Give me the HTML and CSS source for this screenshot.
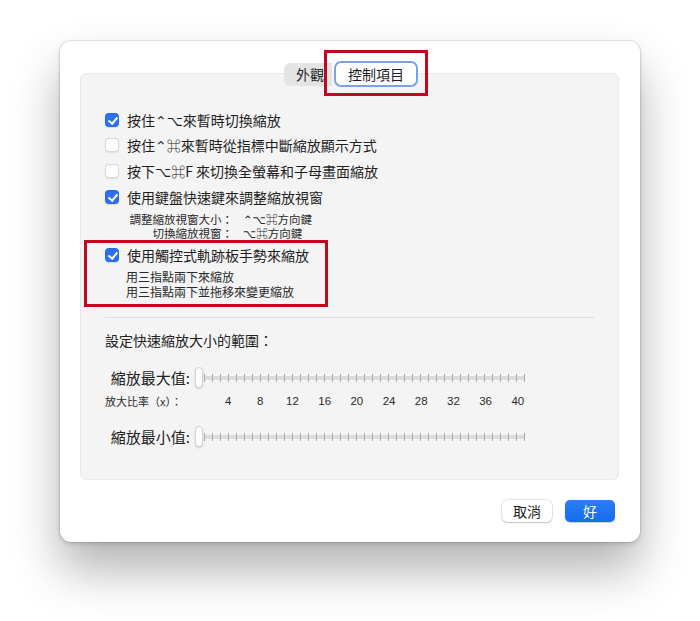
FILE: index.html
```html
<!DOCTYPE html>
<html lang="zh-Hant">
<head>
<meta charset="utf-8">
<title>縮放控制項目</title>
<link rel="stylesheet" href="styles.css">
</head>
<body>
<div class="window">
  <div class="tabs">
    <div class="seg">外觀</div>
    <div class="seg seg-on">控制項目<span class="mark mark-tab"></span></div>
  </div>
  <div class="panel">
    <div class="row"><span class="cb on"></span><span>按住⌃⌥來暫時切換縮放</span></div>
    <div class="row"><span class="cb"></span><span>按住⌃⌘來暫時從指標中斷縮放顯示方式</span></div>
    <div class="row"><span class="cb"></span><span>按下⌥⌘F 來切換全螢幕和子母畫面縮放</span></div>
    <div class="row"><span class="cb on"></span><span>使用鍵盤快速鍵來調整縮放視窗</span></div>
    <div class="keys">
      <div class="kr"><span class="k">調整縮放視窗大小：</span><span>⌃⌥⌘方向鍵</span></div>
      <div class="kr"><span class="k">切換縮放視窗：</span><span>⌥⌘方向鍵</span></div>
    </div>
    <div class="group">
      <span class="mark mark-group"></span>
      <div class="row"><span class="cb on"></span><span>使用觸控式軌跡板手勢來縮放</span></div>
      <div class="hints">
        <div class="hint">用三指點兩下來縮放</div>
        <div class="hint">用三指點兩下並拖移來變更縮放</div>
      </div>
    </div>
    <div class="sep"></div>
    <div class="title">設定快速縮放大小的範圍：</div>
    <div class="slider-row">
      <span class="slabel">縮放最大值:</span>
      <span class="thumb"></span><span class="track"></span>
    </div>
    <div class="scale">
      <span class="scale-label">放大比率（x）：</span>
      <span class="n">4</span><span class="n">8</span><span class="n">12</span><span class="n">16</span><span class="n">20</span><span class="n">24</span><span class="n">28</span><span class="n">32</span><span class="n">36</span><span class="n">40</span>
    </div>
    <div class="slider-row slider-min">
      <span class="slabel">縮放最小值:</span>
      <span class="thumb"></span><span class="track"></span>
    </div>
  </div>
  <div class="buttons">
    <button class="btn">取消</button>
    <button class="btn btn-ok">好</button>
  </div>
</div>
</body>
</html>
```
FILE: styles.css
```css
html, body {
  margin: 0;
  padding: 0;
  background: #ffffff;
}
body {
  padding: 41px 0 0 60px;
  height: 621px;
  box-sizing: border-box;
  font-family: "Noto Sans CJK TC", "DejaVu Sans", sans-serif;
  color: #222;
}
.window {
  width: 580px;
  height: 501px;
  box-sizing: border-box;
  background: #fff;
  border-radius: 11px;
  padding: 20px 21px 20px 20px;
  box-shadow: 0 0 0 1px rgba(0,0,0,0.08), 0 2px 5px rgba(0,0,0,0.14), 0 28px 48px rgba(0,0,0,0.3);
  display: flex;
  flex-direction: column;
}
.tabs {
  position: relative;
  z-index: 2;
  align-self: center;
  display: flex;
  align-items: center;
  height: 26px;
  margin-left: 3px;
}
.seg {
  height: 23px;
  line-height: 23px;
  font-size: 14px;
  padding: 0 8px 0 12px;
  background: #e4e4e4;
  border-radius: 6px 0 0 6px;
  color: #2a2a2a;
}
.seg-on {
  position: relative;
  height: 26px;
  line-height: 22px;
  box-sizing: border-box;
  width: 84px;
  padding: 0;
  text-align: center;
  background: #fff;
  border: 2.5px solid #79a2e8;
  border-radius: 7px;
  margin-left: 2px;
  color: #1d1d1d;
}
.mark {
  position: absolute;
  border: 3px solid #c3081d;
  box-sizing: border-box;
  pointer-events: none;
}
.mark-tab {
  left: -12.5px;
  top: -13.5px;
  width: 104px;
  height: 46px;
}
.panel {
  margin-top: -14px;
  height: 407px;
  box-sizing: border-box;
  background: #f4f4f4;
  border: 1px solid #e9e9e9;
  border-radius: 6px;
  padding: 33px 24px 0 24px;
}
.row {
  display: flex;
  align-items: center;
  height: 25.6px;
  font-size: 14px;
  gap: 8px;
  color: #1e1e1e;
}
.cb {
  width: 14px;
  height: 14px;
  box-sizing: border-box;
  border-radius: 3.5px;
  background: #fff;
  border: 1px solid #d6d6d6;
  box-shadow: 0 0.5px 1px rgba(0,0,0,0.08);
  position: relative;
  flex: none;
}
.cb.on {
  background: #2c6ff2;
  border-color: #2466e8;
}
.cb.on::after {
  content: "";
  position: absolute;
  left: 4px;
  top: 1px;
  width: 3.5px;
  height: 7px;
  border: solid #fff;
  border-width: 0 2px 2px 0;
  transform: rotate(40deg);
}
.keys {
  display: flex;
  flex-direction: column;
  margin: 3px 0 0 21px;
  font-size: 11.5px;
  color: #2a2a2a;
}
.kr {
  display: flex;
  gap: 10px;
  height: 14px;
  line-height: 14px;
}
.k {
  width: 107px;
  text-align: right;
}
.group {
  position: relative;
  margin-top: 2px;
}
.mark-group {
  left: -21px;
  top: -2px;
  width: 244px;
  height: 67px;
}
.hints {
  margin: 1px 0 0 21px;
  font-size: 12px;
  color: #2a2a2a;
}
.hint {
  height: 15px;
  line-height: 15px;
}
.sep {
  height: 1px;
  background: #dedede;
  margin-top: 18px;
}
.title {
  margin-top: 12px;
  font-size: 14px;
  line-height: 20px;
  color: #222;
}
.slider-row {
  display: flex;
  align-items: center;
  height: 22px;
  margin-top: 17px;
}
.slider-min {
  margin-top: 15px;
}
.slabel {
  width: 85px;
  text-align: right;
  font-size: 15px;
  margin-right: 5px;
  color: #222;
}
.thumb {
  width: 8px;
  height: 21px;
  box-sizing: border-box;
  background: #fff;
  border-radius: 4px;
  border: 0.5px solid #d2d2d2;
  box-shadow: 0 1px 2px rgba(0,0,0,0.15);
  flex: none;
}
.track {
  width: 321px;
  height: 8px;
  margin-left: 1px;
  background:
    repeating-linear-gradient(to right, #a9a9a9 0 1px, transparent 1px 8px) 0 0 / 321px 8px no-repeat,
    linear-gradient(#dcdcdc, #dcdcdc) 0 2px / 321px 4px no-repeat;
}
.scale {
  display: flex;
  align-items: center;
  margin-top: 2px;
  height: 20px;
}
.scale-label {
  width: 107px;
  font-size: 11px;
  color: #2a2a2a;
}
.n {
  width: 32.2px;
  text-align: center;
  font-family: "Liberation Sans", "DejaVu Sans", sans-serif;
  font-size: 11.5px;
  color: #2a2a2a;
}
.buttons {
  display: flex;
  justify-content: flex-end;
  gap: 13px;
  margin-top: 20px;
  padding-right: 4px;
}
.btn {
  width: 50px;
  height: 22px;
  padding: 0;
  border: none;
  border-radius: 5px;
  background: #fff;
  box-shadow: 0 0 0 0.5px rgba(0,0,0,0.18), 0 1px 1.5px rgba(0,0,0,0.15);
  font-family: "Noto Sans CJK TC", sans-serif;
  font-size: 14px;
  color: #1e1e1e;
}
.btn-ok {
  background: linear-gradient(#2a7ef7, #166de9);
  color: #fff;
  box-shadow: 0 0.5px 1px rgba(0,0,0,0.2);
}
```
